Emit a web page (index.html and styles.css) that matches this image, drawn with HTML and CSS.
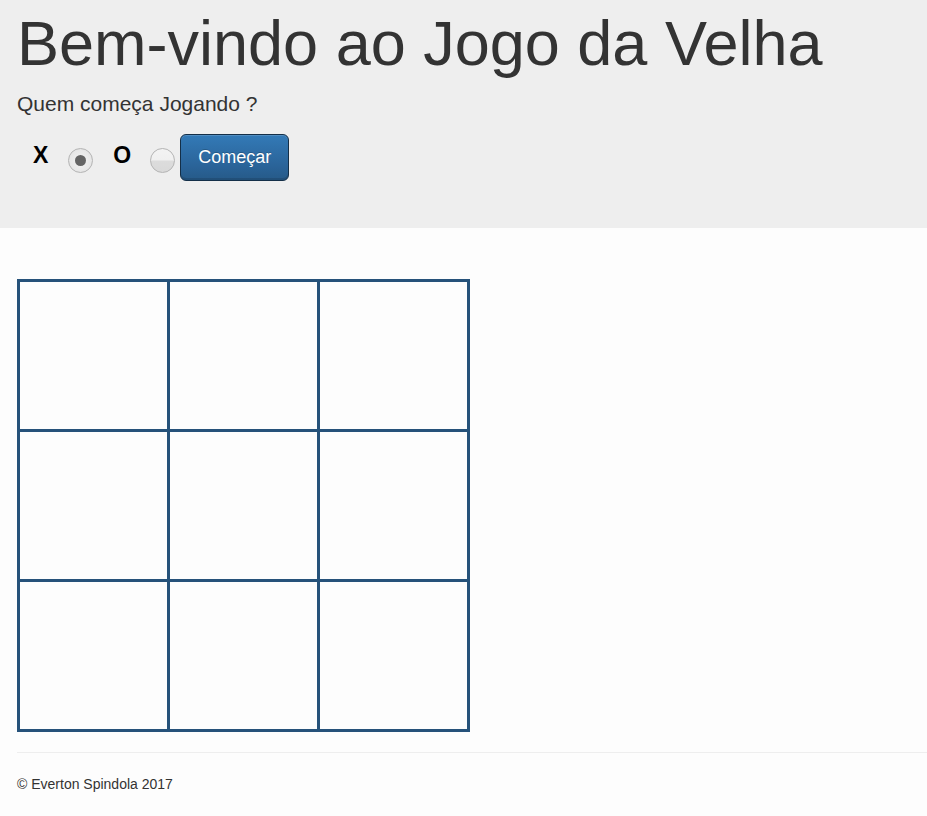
FILE: index.html
```html
<!DOCTYPE html>
<html lang="pt-BR">
<head>
<meta charset="utf-8">
<title>Jogo da Velha</title>
<link rel="stylesheet" href="styles.css">
</head>
<body>
<header class="jumbotron">
  <h1 class="title">Bem-vindo ao Jogo da Velha</h1>
  <p class="lead">Quem começa Jogando ?</p>
  <div class="choice-row">
    <span class="choice-label label-x">X</span>
    <span class="radio radio-checked"><span class="radio-dot"></span></span>
    <span class="choice-label label-o">O</span>
    <span class="radio radio-empty"></span>
    <button class="btn-start" type="button">Começar</button>
  </div>
</header>
<main class="content">
  <div class="board">
    <div class="cell"></div><div class="cell"></div><div class="cell"></div>
    <div class="cell"></div><div class="cell"></div><div class="cell"></div>
    <div class="cell"></div><div class="cell"></div><div class="cell"></div>
  </div>
  <hr class="divider">
  <footer class="footer">© Everton Spindola 2017</footer>
</main>
</body>
</html>
```
FILE: styles.css
```css
html, body {
  margin: 0;
  padding: 0;
}
body {
  background: #fdfdfd;
  color: #333;
  font-family: "Liberation Sans", Arial, sans-serif;
  font-size: 14px;
  line-height: 20px;
}
.jumbotron {
  background: #eeeeee;
  padding: 9px 17px 47px 17px;
  height: 172px;
}
.title {
  margin: 0;
  font-size: 63px;
  font-weight: normal;
  line-height: 69px;
  color: #333;
}
.lead {
  margin: 11px 0 15px 0;
  font-size: 21px;
  line-height: 30px;
  color: #333;
}
.choice-row {
  display: flex;
  align-items: flex-start;
  padding-left: 16px;
}
.choice-label {
  font-size: 23px;
  font-weight: bold;
  line-height: 26px;
  color: #000;
  margin-top: 8px;
}
.label-o {
  margin-left: 20px;
}
.radio {
  box-sizing: border-box;
  width: 25px;
  height: 25px;
  border-radius: 50%;
  border: 1px solid #b4b4b4;
  margin-top: 14px;
  margin-left: 20px;
  display: flex;
  align-items: center;
  justify-content: center;
}
.radio-empty {
  margin-left: 19px;
  background: linear-gradient(to bottom, #f3f3f3 0, #f0f0f0 48%, #dcdcdc 52%, #d9d9d9 100%);
}
.radio-checked {
  background: radial-gradient(circle, #f2f2f2 0, #e8e8e8 60%, #dcdcdc 100%);
}
.radio-dot {
  width: 11px;
  height: 11px;
  border-radius: 50%;
  background: #646464;
}
.btn-start {
  margin-left: 5px;
  box-sizing: border-box;
  height: 47px;
  width: 109px;
  padding: 10px 8px;
  font-family: "Liberation Sans", Arial, sans-serif;
  font-size: 18px;
  line-height: 25px;
  color: #fff;
  text-shadow: 0 -1px 0 rgba(0,0,0,0.2);
  background: linear-gradient(to bottom, #337ab7 0, #2a6398 70%, #265a88 100%);
  border: 1px solid #142f48;
  border-radius: 6px;
  box-shadow: inset 0 1px 0 rgba(255,255,255,0.15), inset 0 -2px 0 rgba(0,0,0,0.12);
}
.content {
  padding: 51px 0 0 17px;
}
.board {
  display: grid;
  grid-template-columns: repeat(3, 150px);
  grid-template-rows: repeat(3, 150px);
  width: 450px;
  border-left: 3px solid #26527a;
  border-top: 3px solid #26527a;
}
.cell {
  border-right: 3px solid #26527a;
  border-bottom: 3px solid #26527a;
  background: #fdfdfd;
}
.divider {
  margin: 20px 0 0 0;
  border: 0;
  border-top: 1px solid #eeeeee;
  height: 0;
}
.footer {
  padding-top: 21px;
  font-size: 14px;
  line-height: 20px;
  color: #333;
}
```
